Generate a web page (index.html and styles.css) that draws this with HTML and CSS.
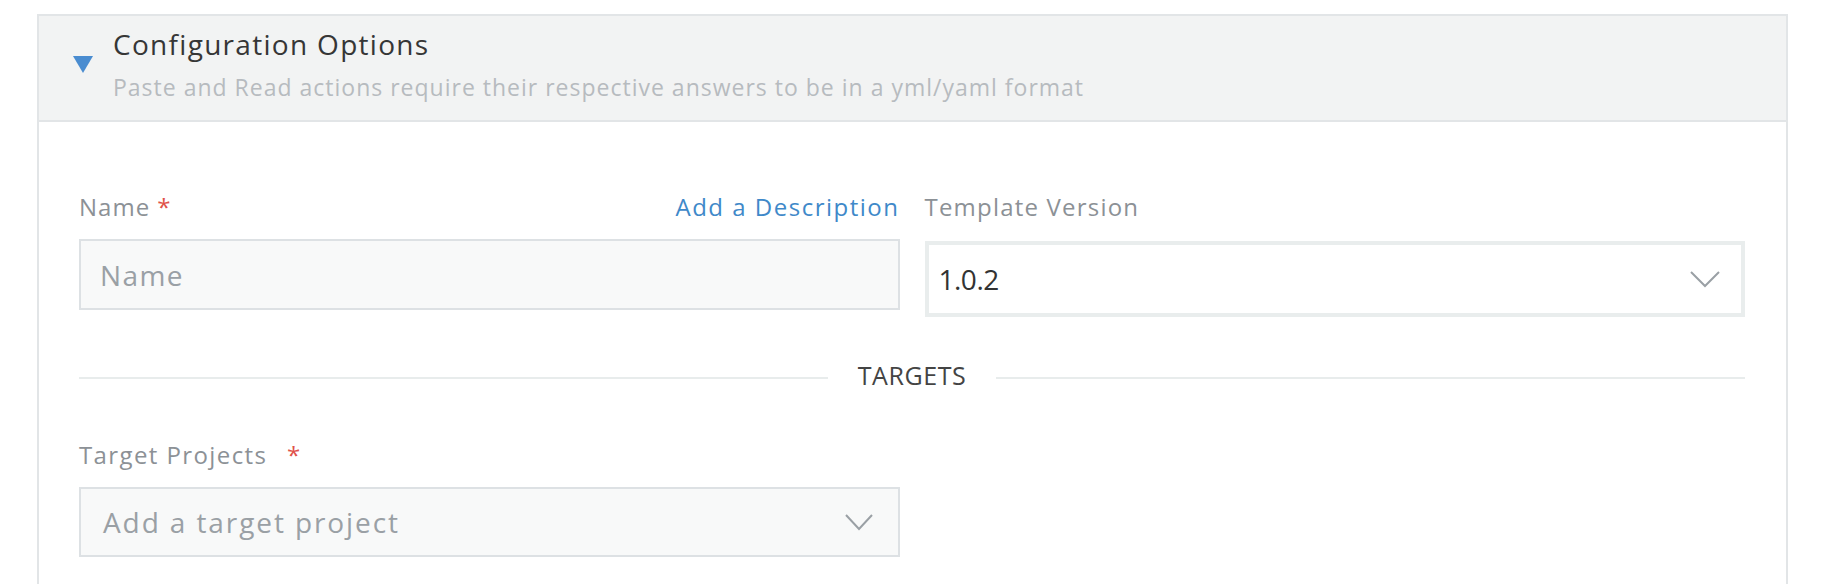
FILE: index.html
```html
<!DOCTYPE html>
<html lang="en">
<head>
<meta charset="utf-8">
<title>Configuration Options</title>
<link rel="stylesheet" href="styles.css">
</head>
<body>
<section class="panel">
  <header class="panel-head">
    <svg class="caret" width="20" height="17" viewBox="0 0 20 17" aria-hidden="true"><polygon points="0,0 20,0 10,17" fill="#4a8cd0"/></svg>
    <div class="head-text">
      <h2 class="title">Configuration Options</h2>
      <p class="subtitle">Paste and Read actions require their respective answers to be in a yml/yaml format</p>
    </div>
  </header>
  <div class="panel-body">
    <div class="row">
      <div class="field">
        <div class="label-row">
          <label class="label" for="name">Name <span class="req">*</span></label>
          <a class="link" href="#">Add a Description</a>
        </div>
        <input id="name" class="input" type="text" placeholder="Name">
      </div>
      <div class="field">
        <div class="label-row">
          <span class="label label-wide">Template Version</span>
        </div>
        <div class="select select-focus">
          <span class="value">1.0.2</span>
          <svg class="chev" width="30" height="17" viewBox="0 0 30 17" aria-hidden="true"><polyline points="1,1 15,15 29,1" fill="none" stroke="#9aa0a5" stroke-width="2"/></svg>
        </div>
      </div>
    </div>

    <div class="divider">
      <span class="divider-line"></span>
      <span class="divider-text">TARGETS</span>
      <span class="divider-line"></span>
    </div>

    <div class="row row-targets">
      <div class="field">
        <div class="label-row">
          <span class="label label-wider">Target Projects <span class="req req-gap">*</span></span>
        </div>
        <div class="select select-plain">
          <span class="placeholder">Add a target project</span>
          <svg class="chev" width="30" height="17" viewBox="0 0 30 17" aria-hidden="true"><polyline points="2,1 15,15 28,1" fill="none" stroke="#9aa0a5" stroke-width="2"/></svg>
        </div>
      </div>
      <div></div>
    </div>
  </div>
</section>
</body>
</html>
```

FILE: styles.css
```css
* { box-sizing: border-box; }

html, body {
  margin: 0;
  background: #ffffff;
}

body {
  padding: 14px 37px 0 37px;
  font-family: "Open Sans", "DejaVu Sans", sans-serif;
  color: #333;
}

.panel {
  border: 2px solid #e2e5e7;
  border-bottom: none;
  min-height: 580px;
  background: #fff;
}

.panel-head {
  display: flex;
  align-items: center;
  gap: 20px;
  padding: 10px 34px 18px 34px;
  background: #f2f3f3;
  border-bottom: 2px solid #e2e5e7;
}

.caret { flex: none; display: block; margin-top: 1px; }

.title {
  margin: 0;
  font-size: 28px;
  line-height: 36px;
  font-weight: 400;
  letter-spacing: 1.3px;
  color: #363636;
}

.subtitle {
  margin: 10px 0 0 0;
  font-size: 23px;
  line-height: 30px;
  letter-spacing: 1px;
  color: #b7bbbf;
}

.panel-body {
  padding: 69px 41px 0 40px;
}

.row {
  display: grid;
  grid-template-columns: 1fr 1fr;
  gap: 25px;
}

.label-row {
  display: flex;
  justify-content: space-between;
  align-items: baseline;
  font-size: 24px;
  line-height: 32px;
  letter-spacing: 1px;
}

.label { color: #8c9196; }
.label-wide { letter-spacing: 1.2px; }
.label-wider { letter-spacing: 1.4px; }

.req { color: #e0524a; }
.req-gap { margin-left: 12px; }

.link {
  color: #3f89c9;
  text-decoration: none;
  letter-spacing: 1.5px;
}

.input {
  display: block;
  width: 100%;
  height: 71px;
  margin-top: 16px;
  padding: 0 19px;
  border: 2px solid #dde1e4;
  border-radius: 0;
  background: #f8f9f9;
  font-family: "Open Sans", "DejaVu Sans", sans-serif;
  font-size: 28px;
  letter-spacing: 1.4px;
  color: #333;
  outline: none;
}

.input::placeholder { color: #9aa0a5; opacity: 1; }

.select {
  display: flex;
  align-items: center;
  justify-content: space-between;
  font-size: 28px;
}

.select-focus {
  height: 76px;
  margin-top: 18px;
  padding: 0 21px 0 10px;
  border: 4px solid #e9eded;
  background: #fff;
}

.select-plain {
  height: 70px;
  margin-top: 16px;
  padding: 0 24px 0 22px;
  border: 2px solid #dde1e4;
  background: #f8f9f9;
}

.value { color: #333; letter-spacing: -0.5px; }

.placeholder { color: #9aa0a5; letter-spacing: 1.9px; }

.chev { display: block; flex: none; }

.divider {
  display: flex;
  align-items: center;
  margin-top: 45px;
}

.divider-line {
  flex: 1;
  height: 2px;
  margin-top: 6px;
  background: #e8ecec;
}

.divider-text {
  padding: 0 30px;
  font-size: 25px;
  line-height: 26px;
  letter-spacing: 0.6px;
  color: #444;
}

.row-targets { margin-top: 51px; }
```
